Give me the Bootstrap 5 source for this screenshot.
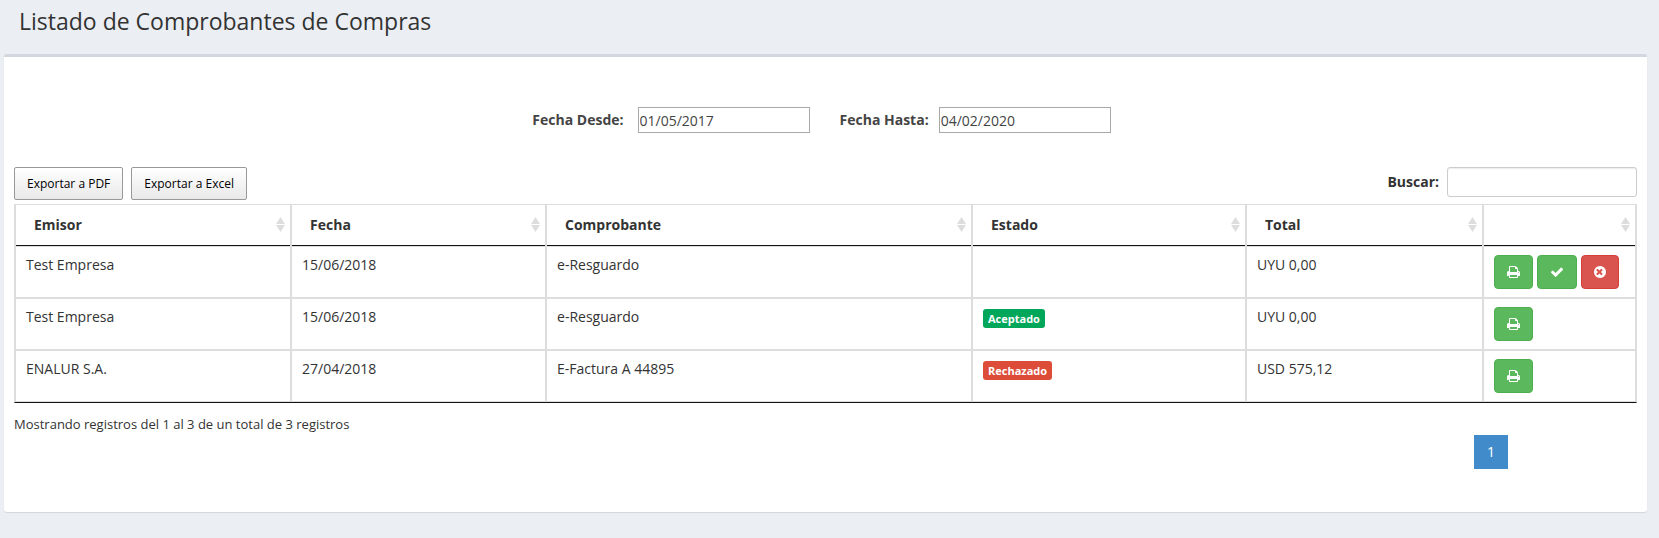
<!DOCTYPE html>
<html lang="es">
<head>
<meta charset="utf-8">
<meta name="viewport" content="width=device-width, initial-scale=1">
<title>Listado de Comprobantes de Compras</title>
<link href="https://cdn.jsdelivr.net/npm/bootstrap@5.3.0/dist/css/bootstrap.min.css" rel="stylesheet">
<script defer src="https://cdn.jsdelivr.net/npm/bootstrap@5.3.0/dist/js/bootstrap.bundle.min.js"></script>
<style>
body { background: #ebeff4; color: #333; font: 14px/20px "Open Sans", "Noto Sans", sans-serif; }
.page-title { font-size: 23px; line-height: 26px; font-weight: 400; padding: 8px 19px 20px; }
.panel { background: #fff; border-top: 3px solid #d2d6de; border-radius: 3px; box-shadow: 0 1px 1px rgba(0,0,0,.1); margin: 0 12px 20px 4px; padding: 50px 10px 43px; }
label { font-weight: 700; }
.date-box { width: 172px; height: 26px; border: 1px solid #a9a9a9; padding: 0 1px; color: #444; background: #fff; }
.dates { color: #444; margin-bottom: 34px; padding-right: 8px; column-gap: 30px; }
.date-from { column-gap: 14px; }
.date-to { column-gap: 10px; }
.search-box { width: 190px; height: 30px; border: 1px solid #ccc; border-radius: 3px; padding: 5px 10px; box-shadow: inset 0 1px 1px rgba(0,0,0,.075); }
.btn-export { font-size: 12px; line-height: 15px; color: #000; border: 1px solid #999; border-radius: 2px; background: linear-gradient(#fff, #e9e9e9); padding: 8px 12px; height: 33px; }
.btn-export:hover { background: #e0e0e0; }
.grid-table { width: 100%; table-layout: fixed; border-collapse: separate; border-spacing: 0; border: 1px solid #ddd; border-bottom-color: #111; }
.grid-table th { height: 41px; padding: 0 5px 2px 18px; border: solid #ddd; border-width: 0 1px; box-shadow: inset 0 -1px #111; }
.grid-table td { height: 52px; padding: 8px 10px; border: 1px solid #ddd; vertical-align: top; }
.sort { fill: #ddd; display: block; }
.btn-act { height: 34px; border: 1px solid #4cae4c; background: #5cb85c; border-radius: 4px; color: #fff; padding: 0 12px; display: inline-flex; align-items: center; }
.btn-act.deny { background: #d9534f; border-color: #d43f3a; }
.btn-act svg { fill: currentColor; display: block; height: 14px; }
.state { display: inline-block; font-size: 11px; line-height: 11px; font-weight: 700; color: #fff; border-radius: 3px; padding: 4px 5px; height: 19px; background: #00a65a; vertical-align: top; margin-top: 2px; }
.state.no { background: #dd4b39; }
.table-info-line { font-size: 13px; padding: 11px 0 1px; }
.page-link.current { width: 34px; height: 34px; background: #428bca; color: #fff; border: 0; padding: 7px 0; text-align: center; border-radius: 0; }
.pager { margin-right: 129px; }
</style>
</head>
<body>
<svg width="0" height="0" class="position-absolute" aria-hidden="true">
  <symbol id="sort" viewBox="0 0 9 15"><path d="M4.500 0 9 7H0zM0 8h9l-4.500 7z"/></symbol>
  <symbol id="print" viewBox="0 0 1664 1536"><path d="M384 1408h896v-256H384v256zm0-640h896V384h-160q-40 0-68-28t-28-68V128H384v640zm1152 64q0-26-19-45t-45-19-45 19-19 45 19 45 45 19 45-19 19-45zm128 0v416q0 13-9.500 22.500t-22.500 9.500h-224v160q0 40-28 68t-68 28H352q-40 0-68-28t-28-68v-160H32q-13 0-22.500-9.500T0 1248V832q0-79 56.500-135.500T192 640h64V96q0-40 28-68t68-28h672q40 0 88 20t76 48l152 152q28 28 48 76t20 88v256h64q79 0 135.500 56.500T1664 832z"/></symbol>
  <symbol id="check" viewBox="0 0 1792 1536"><path d="M1671 438q0 40-28 68L919 1230l-136 136q-28 28-68 28t-68-28l-136-136-362-362q-28-28-28-68t28-68l136-136q28-28 68-28t68 28l294 295 656-657q28-28 68-28t68 28l136 136q28 28 28 68z"/></symbol>
  <symbol id="times" viewBox="0 0 1536 1536"><path d="M1097 1015q0-26-19-45L876 768l202-202q19-19 19-45 0-27-19-46l-90-90q-19-19-46-19-26 0-45 19L695 587 493 385q-19-19-45-19-27 0-46 19l-90 90q-19 19-19 46 0 26 19 45l202 202-202 202q-19 19-19 45 0 27 19 46l90 90q19 19 46 19 26 0 45-19l202-202 202 202q19 19 45 19 27 0 46-19l90-90q19-19 19-46zM1536 768q0 209-103 385.500T1153.500 1433 768 1536t-385.500-103T103 1153.500 0 768t103-385.500T382.500 103 768 0t385.500 103T1433 382.500 1536 768z"/></symbol>
</svg>
<header><h1 class="page-title m-0">Listado de Comprobantes de Compras</h1></header>
<main class="panel">
  <form class="dates d-flex justify-content-center">
    <div class="date-from d-flex align-items-center">
      <label for="desde">Fecha Desde:</label>
      <input id="desde" class="date-box" type="text" value="01/05/2017">
    </div>
    <div class="date-to d-flex align-items-center">
      <label for="hasta">Fecha Hasta:</label>
      <input id="hasta" class="date-box" type="text" value="04/02/2020">
    </div>
  </form>
  <div class="d-flex justify-content-between align-items-start mb-1">
    <div class="d-flex gap-2">
      <button type="button" class="btn-export">Exportar a PDF</button>
      <button type="button" class="btn-export">Exportar a Excel</button>
    </div>
    <div class="d-flex align-items-center">
      <label for="buscar" class="me-2">Buscar:</label>
      <input id="buscar" type="search" class="search-box">
    </div>
  </div>
  <table class="grid-table">
    <colgroup>
      <col style="width:17.03%"><col style="width:15.73%"><col style="width:26.28%"><col style="width:16.90%"><col style="width:14.62%"><col style="width:9.44%">
    </colgroup>
    <thead>
      <tr>
        <th><div class="d-flex justify-content-between align-items-center">Emisor<svg class="sort" width="9" height="15"><use href="#sort"/></svg></div></th>
        <th><div class="d-flex justify-content-between align-items-center">Fecha<svg class="sort" width="9" height="15"><use href="#sort"/></svg></div></th>
        <th><div class="d-flex justify-content-between align-items-center">Comprobante<svg class="sort" width="9" height="15"><use href="#sort"/></svg></div></th>
        <th><div class="d-flex justify-content-between align-items-center">Estado<svg class="sort" width="9" height="15"><use href="#sort"/></svg></div></th>
        <th><div class="d-flex justify-content-between align-items-center">Total<svg class="sort" width="9" height="15"><use href="#sort"/></svg></div></th>
        <th><div class="d-flex justify-content-end align-items-center"><svg class="sort" width="9" height="15"><use href="#sort"/></svg></div></th>
      </tr>
    </thead>
    <tbody>
      <tr>
        <td>Test Empresa</td><td>15/06/2018</td><td>e-Resguardo</td><td></td><td>UYU 0,00</td>
        <td><div class="d-flex gap-1">
          <button type="button" class="btn-act" aria-label="Imprimir"><svg width="13"><use href="#print"/></svg></button>
          <button type="button" class="btn-act" aria-label="Aceptar"><svg width="14"><use href="#check"/></svg></button>
          <button type="button" class="btn-act deny" aria-label="Rechazar"><svg width="12"><use href="#times"/></svg></button>
        </div></td>
      </tr>
      <tr>
        <td>Test Empresa</td><td>15/06/2018</td><td>e-Resguardo</td><td><span class="state">Aceptado</span></td><td>UYU 0,00</td>
        <td><div class="d-flex gap-1"><button type="button" class="btn-act" aria-label="Imprimir"><svg width="13"><use href="#print"/></svg></button></div></td>
      </tr>
      <tr>
        <td>ENALUR S.A.</td><td>27/04/2018</td><td>E-Factura A 44895</td><td><span class="state no">Rechazado</span></td><td>USD 575,12</td>
        <td><div class="d-flex gap-1"><button type="button" class="btn-act" aria-label="Imprimir"><svg width="13"><use href="#print"/></svg></button></div></td>
      </tr>
    </tbody>
  </table>
  <div class="table-info-line">Mostrando registros del 1 al 3 de un total de 3 registros</div>
  <nav class="pager d-flex justify-content-end" aria-label="Páginas"><a href="#" class="page-link current">1</a></nav>
</main>
</body>
</html>
